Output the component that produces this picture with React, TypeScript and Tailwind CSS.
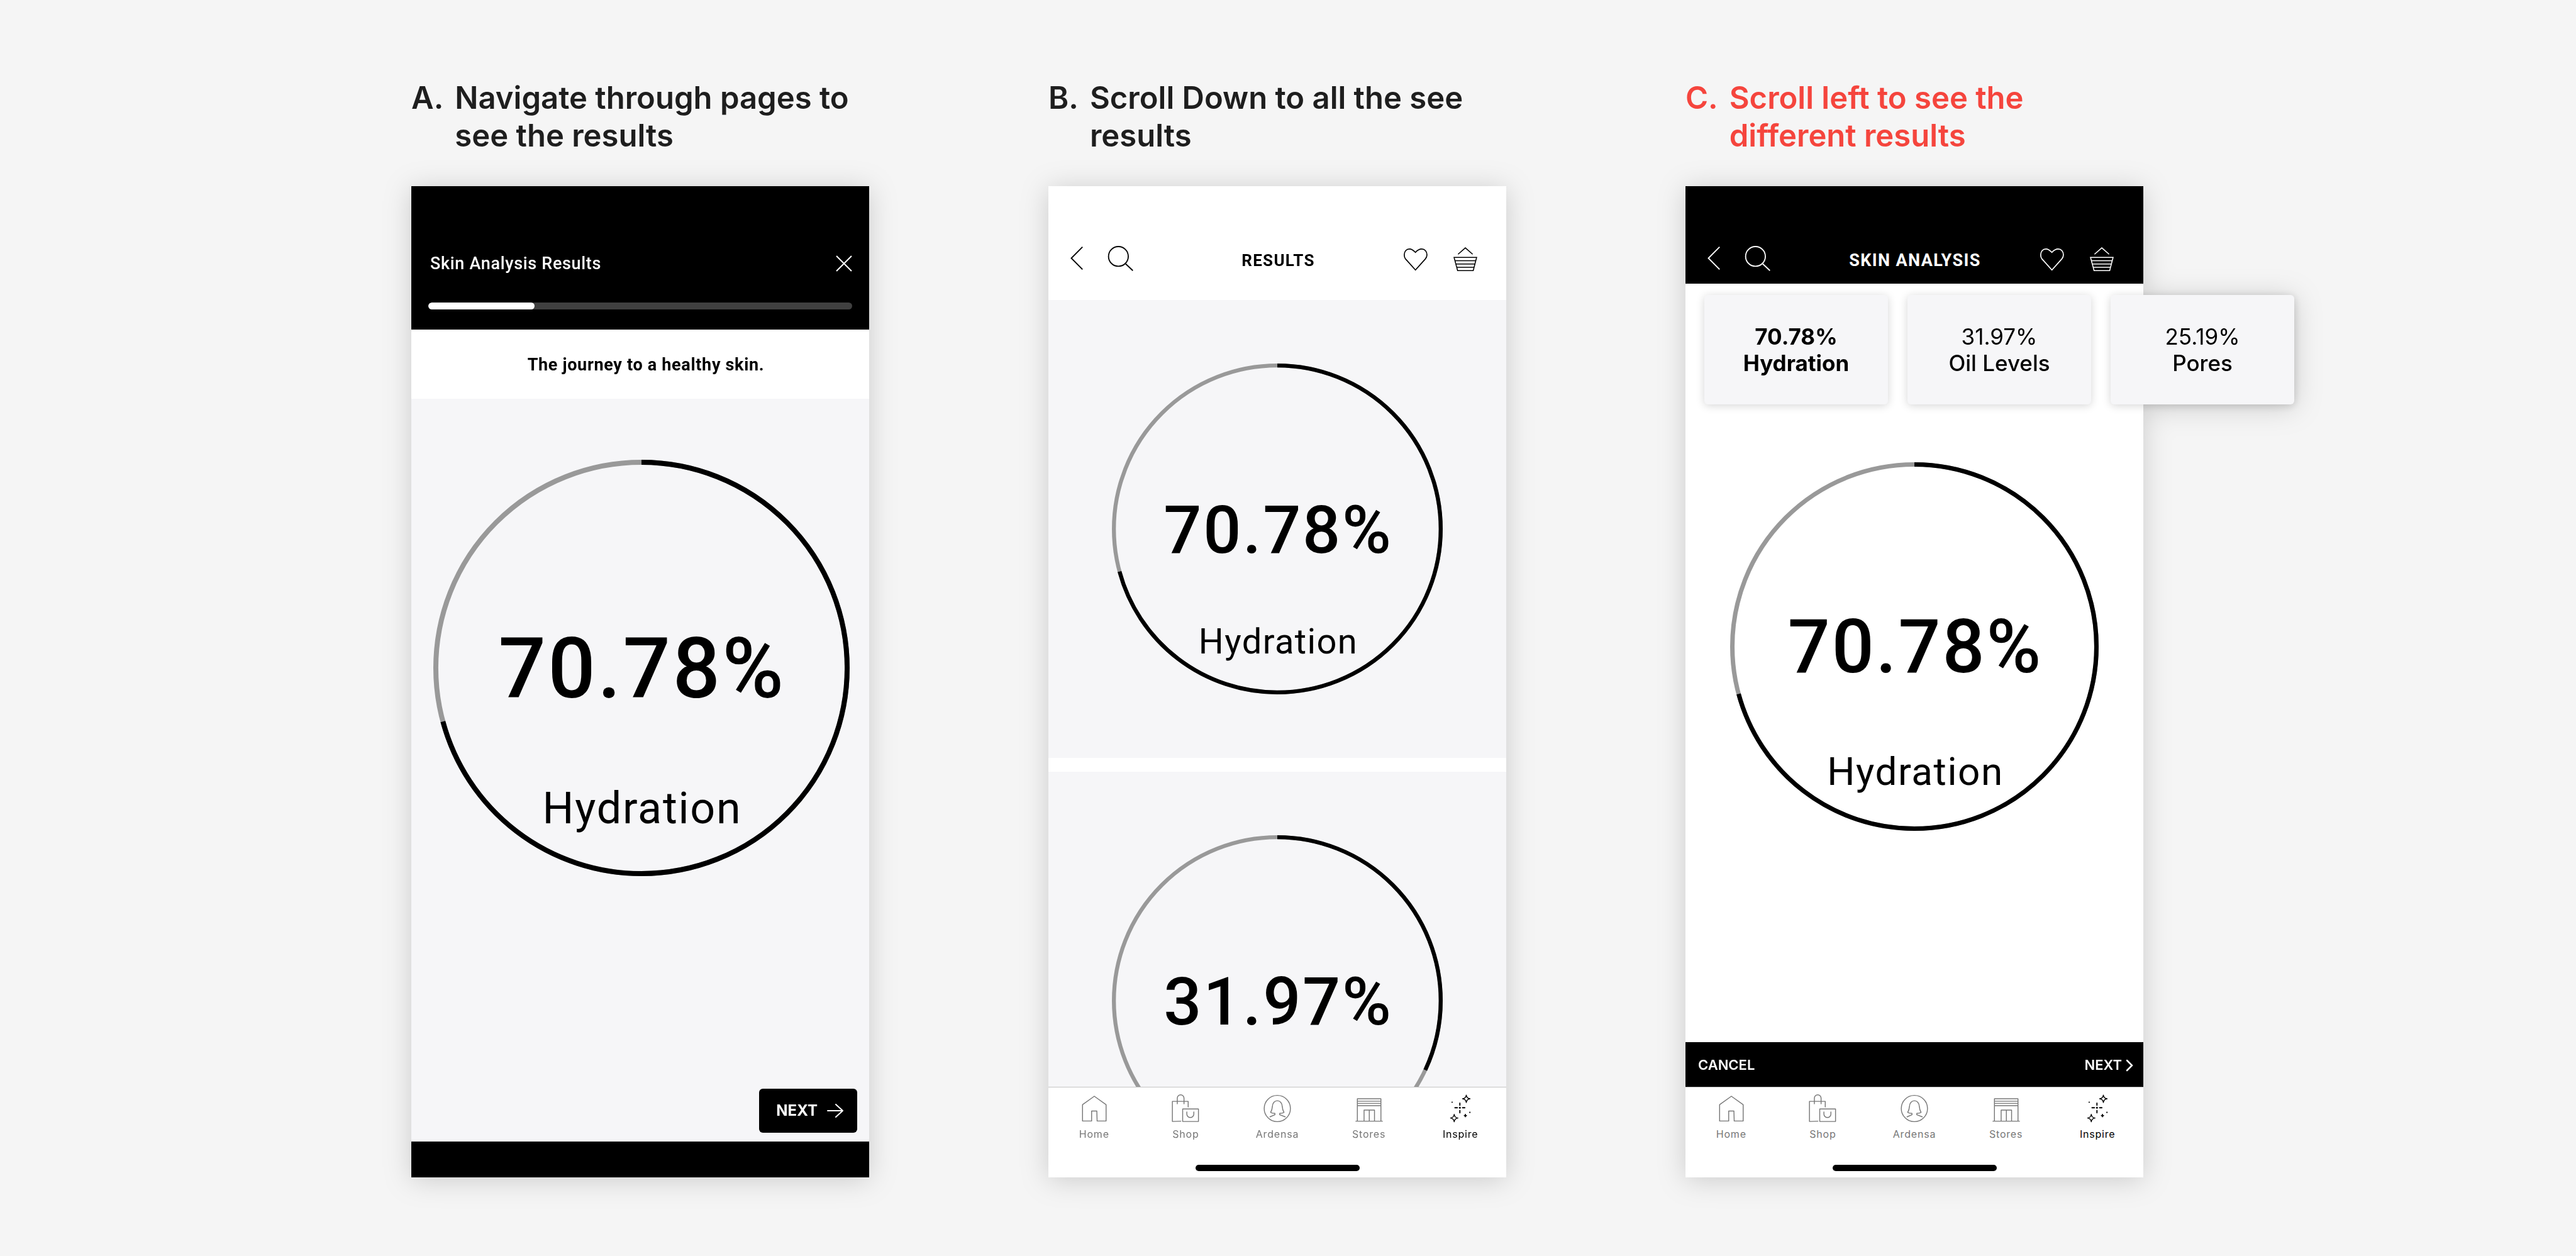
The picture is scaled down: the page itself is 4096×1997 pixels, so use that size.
import type { ReactNode } from "react";

type IconProps = { className?: string };

function BackIcon({ className }: IconProps) {
  return (
    <svg viewBox="0 0 28 52" fill="none" stroke="currentColor" strokeWidth="2.6" className={className} aria-hidden="true">
      <path d="M27 1 2 26 27 51" />
    </svg>
  );
}

function SearchIcon({ className }: IconProps) {
  return (
    <svg viewBox="0 0 58 58" fill="none" stroke="currentColor" strokeWidth="2.6" className={className} aria-hidden="true">
      <circle cx="24.5" cy="25" r="22.2" />
      <path d="M40 41 57 57" />
    </svg>
  );
}

function HeartIcon({ className }: IconProps) {
  return (
    <svg viewBox="0 0 54 54" fill="none" stroke="currentColor" strokeWidth="2.4" className={className} aria-hidden="true">
      <path d="M26.5 51.5 4 26.5C1.7 23.7 1.2 21 1.2 17.5 1.2 9.5 6 4 13 4c5.500 0 9 3 13.500 7.700C31 7 35 4.200 40.500 4.200c7 0 12 5.300 12 13.300 0 3.500-1 6-3.500 9Z" />
    </svg>
  );
}

function BasketIcon({ className }: IconProps) {
  return (
    <svg viewBox="0 0 54 54" fill="none" stroke="currentColor" strokeWidth="2.2" className={className} aria-hidden="true">
      <path d="M10.500 16 27 1.500 43.500 16M1.500 23h51l-7.700 30H9.500ZM3.500 30.500h47M5.500 38h43M7.500 45.500h39" />
    </svg>
  );
}

function CloseIcon({ className }: IconProps) {
  return (
    <svg viewBox="0 0 26 26" fill="none" stroke="currentColor" strokeWidth="2" className={className} aria-hidden="true">
      <path d="M1 1 25 25M25 1 1 25" />
    </svg>
  );
}

function ArrowIcon({ className }: IconProps) {
  return (
    <svg
      viewBox="0 0 26 22"
      fill="none"
      stroke="currentColor"
      strokeWidth="2"
      strokeLinecap="round"
      strokeLinejoin="round"
      className={className}
      aria-hidden="true"
    >
      <path d="M1 11H25M14 1 25 11 14 21" />
    </svg>
  );
}

function ChevronIcon({ className }: IconProps) {
  return (
    <svg viewBox="0 0 12 20" fill="none" stroke="currentColor" strokeWidth="2.5" strokeLinecap="round" className={className} aria-hidden="true">
      <path d="M2 2 10 10 2 18" />
    </svg>
  );
}

function TabIcon({ children }: { children: ReactNode }) {
  return (
    <svg
      viewBox="0 0 194 194"
      fill="none"
      stroke="currentColor"
      strokeWidth="6"
      strokeLinecap="round"
      strokeLinejoin="round"
      className="size-[46px]"
      aria-hidden="true"
    >
      {children}
    </svg>
  );
}

const tabs: { label: string; icon: ReactNode; active?: boolean }[] = [
  {
    label: "Home",
    icon: <path d="M97 17 176 73V183H116L114 116H79V183H18V73Z" />,
  },
  {
    label: "Shop",
    icon: (
      <>
        <path d="M115 89V51H9V186L66 184M42 68V30a22.500 22.500 0 0 1 45 0V68" />
        <path d="M78 102H184V186H78ZM106 122V136a23.500 23.500 0 0 0 47 0V122" />
      </>
    ),
  },
  {
    label: "Ardensa",
    icon: (
      <>
        <circle cx="97" cy="99" r="88" />
        <path d="M48 155 81 141V132C70 132 58 129 52 125 60 112 63 100 64 85 65 60 80 47 97 47S129 60 130 85C131 100 134 112 142 125 136 129 124 132 113 132V141L150 155" />
      </>
    ),
  },
  {
    label: "Stores",
    icon: (
      <path d="M18 184V34H176V184M8 184H186M18 50H176M18 65H176M18 80H176M63 184V110H133V184M98 110V184" />
    ),
  },
  {
    label: "Inspire",
    active: true,
    icon: (
      <>
        <path d="M137 9C139 25 146 32 162 34 146 36 139 43 137 59 135 43 128 36 112 34 128 32 135 25 137 9Z" />
        <path d="M56 138C58 154 65 161 81 163 65 165 58 172 56 188 54 172 47 165 31 163 47 161 54 154 56 138Z" />
        <path strokeWidth="8" d="M94 63V77M94 113V128M61 94H77M112 94H127" />
        <path fill="currentColor" strokeWidth="4" d="M131 137 134 144 141 147 134 150 131 157 128 150 121 147 128 144Z" />
        <g fill="currentColor" stroke="none">
          <circle cx="94" cy="94" r="6.500" />
          <circle cx="42" cy="57" r="4.500" />
          <circle cx="161" cy="125" r="4.500" />
        </g>
      </>
    ),
  },
];

function TabBar() {
  return (
    <div className="shrink-0 bg-white">
      <nav className="grid grid-cols-5 border-t border-[#c4c4c4] pt-[10px]" aria-label="Main">
        {tabs.map((tab) => (
          <a
            key={tab.label}
            href="#"
            className={
              tab.active
                ? "flex flex-col items-center gap-[8px] text-[16px] leading-[20px] tracking-wider text-black"
                : "flex flex-col items-center gap-[8px] text-[16px] leading-[20px] tracking-wider text-[#777777]"
            }
          >
            <TabIcon>{tab.icon}</TabIcon>
            {tab.label}
          </a>
        ))}
      </nav>
      <div className="mx-auto mt-[39px] mb-[10px] h-[10px] w-[261px] rounded-full bg-black" />
    </div>
  );
}

const ringSizes = {
  sm: {
    box: "size-[526px]",
    body: "pt-[212px] gap-[96px]",
    value: "text-[106px]",
    label: "text-[56px]",
  },
  md: {
    box: "size-[586px]",
    body: "pt-[235px] gap-[108px]",
    value: "text-[118px]",
    label: "text-[62px]",
  },
  lg: {
    box: "size-[662px]",
    body: "pt-[266px] gap-[120px]",
    value: "text-[133px]",
    label: "text-[70px]",
  },
};

function Ring({ size, percent, label }: { size: keyof typeof ringSizes; percent: number; label?: string }) {
  const s = ringSizes[size];
  return (
    <div className={`grid shrink-0 font-['Roboto',sans-serif] text-black ${s.box}`}>
      <svg viewBox="0 0 1000 1000" fill="none" strokeWidth="12" className="col-start-1 row-start-1 size-full -rotate-90" aria-hidden="true">
        <circle cx="500" cy="500" r="494" stroke="#999999" />
        <circle cx="500" cy="500" r="494" stroke="#000000" pathLength="100" strokeDasharray={`${percent} 100`} />
      </svg>
      <div className={`col-start-1 row-start-1 flex flex-col items-center pl-[3px] ${s.body}`}>
        <p className={`leading-none font-medium tracking-wide ${s.value}`}>{percent.toFixed(2)}%</p>
        {label && <p className={`leading-none tracking-wide ${s.label}`}>{label}</p>}
      </div>
    </div>
  );
}

function NavHeader({ title, dark }: { title: string; dark?: boolean }) {
  return (
    <header
      className={
        dark
          ? "grid shrink-0 grid-cols-[1fr_auto_1fr] items-center bg-black pt-[94px] pr-[47px] pb-[20px] pl-[35px] text-[27px] text-white"
          : "grid shrink-0 grid-cols-[1fr_auto_1fr] items-center bg-white pt-[94px] pr-[46px] pb-[46px] pl-[35px] text-[26px] text-black"
      }
    >
      <div className="flex items-center gap-[39px]">
        <button type="button" aria-label="Back">
          <BackIcon className="h-[37px] w-[20px]" />
        </button>
        <button type="button" aria-label="Search">
          <SearchIcon className="size-[41px]" />
        </button>
      </div>
      <h2 className="pt-[6px] pl-[14px] font-['Roboto',sans-serif] leading-[30px] font-bold tracking-wider">{title}</h2>
      <div className="flex items-center justify-end gap-[41px] pt-[2px]">
        <button type="button" aria-label="Favourites">
          <HeartIcon className="size-[38px]" />
        </button>
        <button type="button" aria-label="Basket">
          <BasketIcon className="size-[38px]" />
        </button>
      </div>
    </header>
  );
}

function Option({ marker, lines, accent, children }: { marker: string; lines: string[]; accent?: boolean; children: ReactNode }) {
  return (
    <section className="flex min-w-0 flex-col gap-[50px]">
      <h1
        className={
          accent
            ? "flex gap-[18px] text-[49px] leading-[60px] font-semibold text-[#f5453d]"
            : "flex gap-[18px] text-[49px] leading-[60px] font-semibold text-[#1e1e1e]"
        }
      >
        <span>{marker}</span>
        <span className="whitespace-nowrap">
          {lines[0]}
          <br />
          {lines[1]}
        </span>
      </h1>
      <div className="flex min-h-[1576px] flex-col bg-white drop-shadow-[0_4px_22px_rgba(0,0,0,0.17)]">{children}</div>
    </section>
  );
}

const cards = [
  { value: "70.78%", label: "Hydration", active: true },
  { value: "31.97%", label: "Oil Levels" },
  { value: "25.19%", label: "Pores" },
];

export default function App() {
  return (
    <main className="grid min-h-screen grid-cols-3 content-start gap-x-[285px] overflow-hidden bg-[#f5f5f5] pt-[126px] pr-[688px] pl-[654px] font-['Inter',sans-serif]">
      <Option marker="A." lines={["Navigate through pages to", "see the results"]}>
        <header className="shrink-0 bg-black px-[27px] pt-[107px] pb-[32px] font-['Roboto',sans-serif] text-white">
          <div className="flex h-[32px] items-center justify-between pl-[3px]">
            <h2 className="text-[27px] leading-[32px] font-medium tracking-wide">Skin Analysis Results</h2>
            <button type="button" aria-label="Close">
              <CloseIcon className="size-[26px]" />
            </button>
          </div>
          <div className="mt-[46px] h-[11px] overflow-hidden rounded-full bg-[#404040]" role="progressbar" aria-label="Results viewed" aria-valuenow={25} aria-valuemin={0} aria-valuemax={100}>
            <div className="h-full w-1/4 rounded-full bg-white" />
          </div>
        </header>
        <p className="shrink-0 bg-white pt-[40px] pb-[38px] pl-[18px] text-center font-['Roboto',sans-serif] text-[27px] leading-[32px] font-bold tracking-wide text-black">
          The journey to a healthy skin.
        </p>
        <div className="flex flex-1 flex-col items-center justify-between bg-[#f6f6f8] pt-[97px] pb-[14px] pl-[3px]">
          <Ring size="lg" percent={70.78} label="Hydration" />
          <button type="button" className="mr-[19px] flex h-[70px] items-center gap-[15px] self-end rounded-[6px] bg-black pr-[22px] pl-[27px] text-[24px] font-bold text-white">
            NEXT
            <ArrowIcon className="h-[22px] w-[26px]" />
          </button>
        </div>
        <div className="h-[57px] shrink-0 bg-black" />
      </Option>

      <Option marker="B." lines={["Scroll Down to all the see", "results"]}>
        <NavHeader title="RESULTS" />
        <div className="flex h-[1251px] flex-col gap-[22px] overflow-hidden bg-white">
          <div className="flex h-[728px] shrink-0 items-center justify-center bg-[#f6f6f8]">
            <Ring size="sm" percent={70.78} label="Hydration" />
          </div>
          <div className="flex h-[728px] shrink-0 items-center justify-center bg-[#f6f6f8]">
            <Ring size="sm" percent={31.97} />
          </div>
        </div>
        <TabBar />
      </Option>

      <Option marker="C." lines={["Scroll left to see the", "different results"]} accent>
        <NavHeader title="SKIN ANALYSIS" dark />
        <div className="flex gap-[31px] pt-[18px] pl-[30px]">
          {cards.map((card) => (
            <button
              key={card.label}
              type="button"
              className={
                card.active
                  ? "flex h-[174px] w-[292px] shrink-0 flex-col items-center justify-center rounded-[6px] bg-[#f6f6f8] text-[35px] leading-[42px] font-bold text-black shadow-[0_2px_14px_rgba(0,0,0,0.17)]"
                  : "flex h-[174px] w-[292px] shrink-0 flex-col items-center justify-center rounded-[6px] bg-[#f6f6f8] text-[35px] leading-[42px] text-black shadow-[0_2px_14px_rgba(0,0,0,0.17)]"
              }
            >
              <span>{card.value}</span>
              <span className={card.active ? "font-bold" : "font-medium"}>{card.label}</span>
            </button>
          ))}
        </div>
        <div className="flex flex-1 flex-col items-center pt-[92px]">
          <Ring size="md" percent={70.78} label="Hydration" />
        </div>
        <div className="flex h-[71px] shrink-0 items-center justify-between bg-black pt-[2px] pr-[16px] pl-[20px] text-[22px] font-semibold text-white">
          <button type="button">CANCEL</button>
          <button type="button" className="flex items-center gap-[6px]">
            NEXT
            <ChevronIcon className="h-[20px] w-[12px]" />
          </button>
        </div>
        <TabBar />
      </Option>
    </main>
  );
}
